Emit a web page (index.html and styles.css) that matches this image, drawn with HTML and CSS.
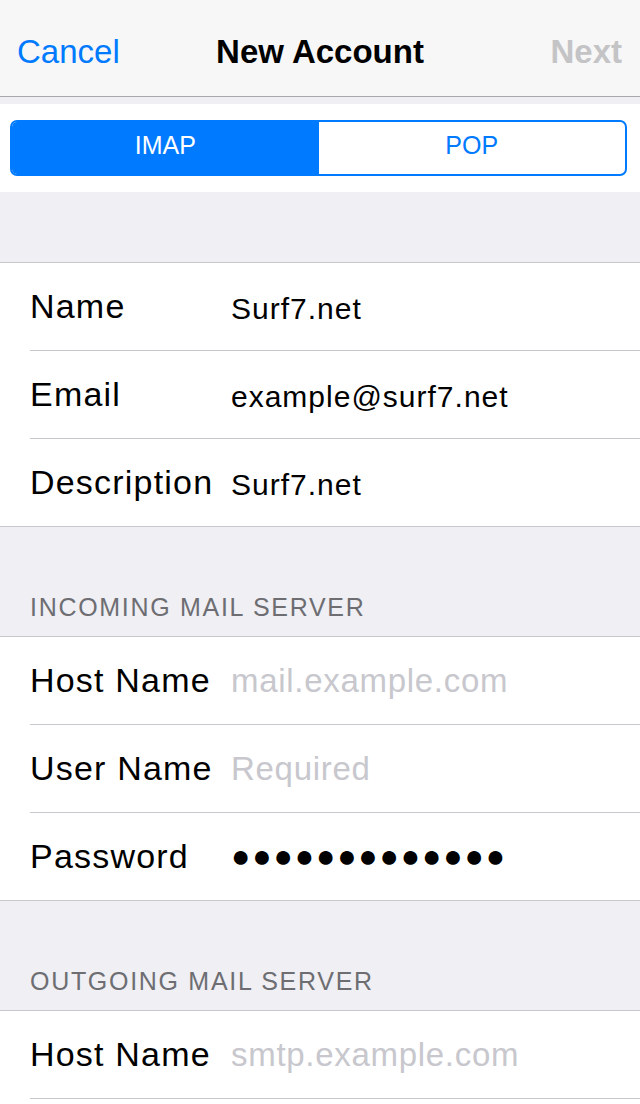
FILE: index.html
```html
<!DOCTYPE html>
<html lang="en">
<head>
<meta charset="UTF-8" />
<meta name="viewport" content="width=device-width, initial-scale=1" />
<title>New Account</title>
<link rel="stylesheet" href="styles.css">
</head>
<body>

<header class="navbar">
  <span class="nav-btn cancel">Cancel</span>
  <span class="nav-title">New Account</span>
  <span class="nav-btn next">Next</span>
</header>

<div class="segment-wrap">
  <div class="segment">
    <span class="seg-item ativo">IMAP</span>
    <span class="seg-item">POP</span>
  </div>
</div>

<div class="spacer"></div>

<ul class="group">
  <li class="row"><span class="label">Name</span><span class="value">Surf7.net</span></li>
  <li class="row"><span class="label">Email</span><span class="value">example@surf7.net</span></li>
  <li class="row"><span class="label">Description</span><span class="value">Surf7.net</span></li>
</ul>

<div class="section-title">INCOMING MAIL SERVER</div>
<ul class="group">
  <li class="row"><span class="label">Host Name</span><span class="placeholder">mail.example.com</span></li>
  <li class="row"><span class="label">User Name</span><span class="placeholder">Required</span></li>
  <li class="row"><span class="label">Password</span><span class="dots">●●●●●●●●●●●●●</span></li>
</ul>

<div class="section-title">OUTGOING MAIL SERVER</div>
<ul class="group">
  <li class="row"><span class="label">Host Name</span><span class="placeholder">smtp.example.com</span></li>
  <li class="row"></li>
</ul>

</body>
</html>
```

FILE: styles.css
```css
/* Reset e básicos */
html, body {
  margin: 0; padding: 0;
  font-family: 'Liberation Sans', Arial, sans-serif;
  background: #efeff4;
  color: #000;
}

.navbar {
  height: 96px;
  background: #f7f7f8;
  border-bottom: 1px solid #a9a9ac;
  display: flex;
  align-items: center;
  justify-content: space-between;
  padding: 0 18px 0 17px;
  position: relative;
}
.nav-btn {
  font-size: 33px;
  padding-top: 8px;
}
.cancel { color: #007aff; }
.next { color: #c4c4c6; font-weight: bold; }
.nav-title {
  position: absolute;
  left: 0; right: 0;
  text-align: center;
  font-size: 33px;
  font-weight: bold;
  padding-top: 8px;
  pointer-events: none;
}

.segment-wrap {
  margin-top: 7px;
  background: #fff;
  padding: 16px 13px 16px 10px;
}
.segment {
  display: flex;
  height: 56px;
  border: 2px solid #007aff;
  border-radius: 7px;
  overflow: hidden;
  box-sizing: border-box;
}
.seg-item {
  flex: 1;
  display: flex;
  align-items: center;
  justify-content: center;
  font-size: 25px;
  color: #007aff;
  padding-bottom: 5px;
}
.seg-item.ativo {
  background: #007aff;
  color: #fff;
}

.spacer { height: 70px; }

.group {
  list-style: none;
  margin: 0;
  padding: 0 0 0 30px;
  background: #fff;
  border-top: 1px solid #c8c7cc;
  border-bottom: 1px solid #c8c7cc;
}
.row {
  height: 87px;
  display: flex;
  align-items: center;
  border-bottom: 1px solid #c8c7cc;
}
.row:last-child { border-bottom: none; }

.label {
  width: 201px;
  flex-shrink: 0;
  font-size: 34px;
  letter-spacing: 1.2px;
}
.value {
  font-size: 30px;
  letter-spacing: 1px;
  padding-top: 4px;
}
.placeholder {
  font-size: 33px;
  letter-spacing: 0.7px;
  color: #c7c7cd;
}
.dots {
  font-size: 32px;
  letter-spacing: 1.9px;
}

.section-title {
  padding: 66px 30px 14px;
  font-size: 25px;
  letter-spacing: 1.7px;
  color: #6d6d72;
}
```
